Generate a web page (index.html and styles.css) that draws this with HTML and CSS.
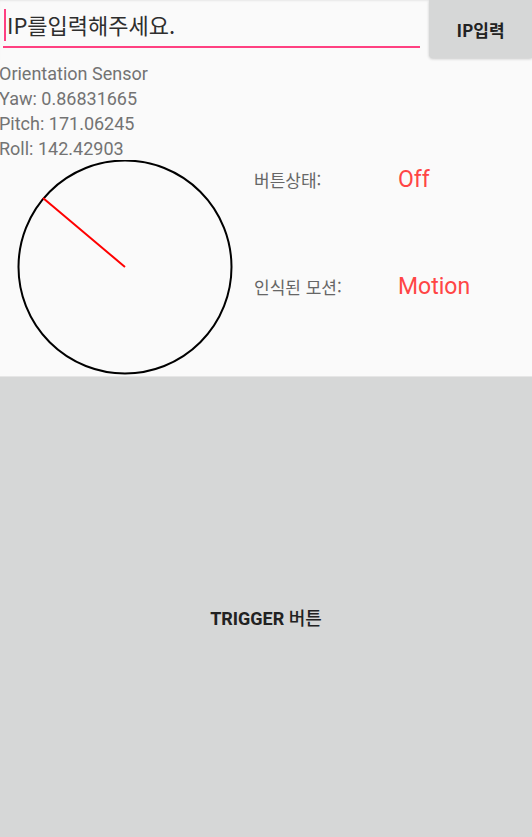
FILE: index.html
```html
<!DOCTYPE html>
<html lang="ko">
<head>
<meta charset="utf-8">
<link rel="stylesheet" href="styles.css">
</head>
<body>
<div class="app">
  <div class="topbar">
    <div class="field">
      <span class="cursor"></span>
      <span class="placeholder">IP를입력해주세요.</span>
    </div>
    <div class="ipbtn">IP입력</div>
  </div>
  <div class="sensor">
    <div>Orientation Sensor</div>
    <div>Yaw: 0.86831665</div>
    <div>Pitch: 171.06245</div>
    <div>Roll: 142.42903</div>
  </div>
  <div class="middle">
    <div class="dial">
      <svg width="250" height="216" viewBox="0 0 250 216">
        <circle cx="125" cy="107" r="106.5" fill="none" stroke="#000" stroke-width="2"/>
        <line x1="125" y1="107" x2="43" y2="38" stroke="#ff0000" stroke-width="2"/>
      </svg>
    </div>
    <div class="status">
      <div class="row row1"><span class="label">버튼상태:</span><span class="value">Off</span></div>
      <div class="row row2"><span class="label">인식된 모션:</span><span class="value">Motion</span></div>
    </div>
  </div>
  <div class="trigger"><span>TRIGGER <span class="ko">버튼</span></span></div>
</div>
</body>
</html>
```
FILE: styles.css
```css
html, body { margin: 0; padding: 0; }
body {
  background: #fafafa;
  font-family: Roboto, "Noto Sans CJK KR", sans-serif;
  width: 532px;
  height: 837px;
  overflow: hidden;
}
.app { display: flex; flex-direction: column; height: 837px; }
.topbar {
  display: flex;
  height: 60px;
  box-shadow: inset 0 2px 2px -1px rgba(0,0,0,0.08);
}
.field {
  position: relative;
  width: 417px;
  margin-left: 3px;
  height: 48px;
  border-bottom: 2px solid #ff4081;
  box-sizing: border-box;
  display: flex;
  align-items: center;
  padding-top: 10px;
}
.cursor {
  width: 2px;
  height: 32px;
  background: #ff4081;
  margin-top: -6px;
  margin-left: 1px;
}
.placeholder {
  font-size: 22px;
  color: #2e2e2e;
  margin-left: 1px;
  margin-top: -8px;
  font-family: "Noto Sans CJK KR", sans-serif;
}
.ipbtn {
  margin-left: 9px;
  width: 103px;
  height: 58px;
  background: #d6d7d7;
  border-bottom-left-radius: 4px;
  box-shadow: 0 1px 3px rgba(0,0,0,0.2);
  display: flex;
  align-items: center;
  justify-content: center;
  font-weight: bold;
  font-size: 17px;
  color: #222;
  font-family: "Noto Sans CJK KR", sans-serif;
}
.sensor {
  font-size: 18px;
  line-height: 25px;
  color: #737373;
  margin-top: 1px;
  margin-left: -1px;
}
.middle {
  display: flex;
  height: 216px;
  margin-top: -1px;
}
.dial { width: 250px; height: 216px; }
.dial svg { display: block; }
.status { margin-left: 4px; }
.row { display: flex; align-items: center; height: 24px; }
.row1 { margin-top: 7px; }
.row2 { margin-top: 83px; }
.label {
  width: 144px;
  font-size: 17px;
  color: #666;
  font-family: "Noto Sans CJK KR", sans-serif;
}
.value {
  font-size: 23px;
  color: #ff4545;
}
.trigger {
  flex: 1;
  background: #d6d7d7;
  display: flex;
  align-items: center;
  justify-content: center;
  padding-top: 20px;
  box-sizing: border-box;
  font-weight: bold;
  font-size: 18px;
  color: #222;
  font-family: Roboto, "Noto Sans CJK KR", sans-serif;
  border-top: 1px solid #e6e6e6;
}
.trigger .ko {
  font-family: "Noto Sans CJK KR", sans-serif;
  font-weight: 500;
}
```
